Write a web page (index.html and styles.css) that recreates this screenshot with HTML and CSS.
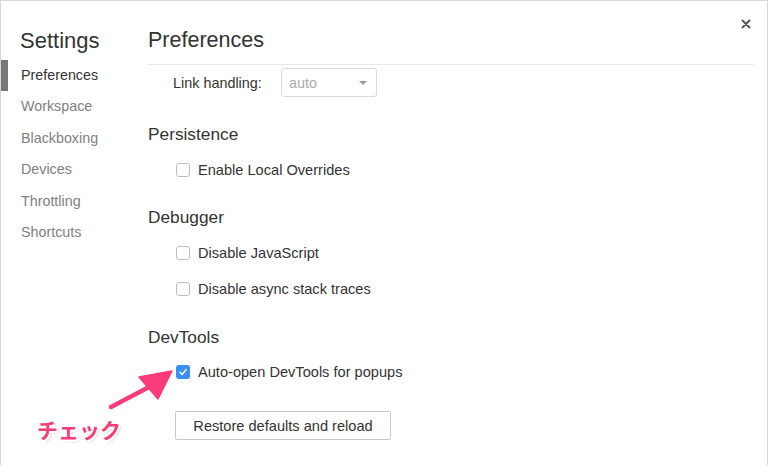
FILE: index.html
```html
<!DOCTYPE html>
<html lang="ja">
<head>
<meta charset="utf-8">
<title>Settings</title>
<link rel="stylesheet" href="styles.css">
</head>
<body>
<div class="dialog">
  <aside class="sidebar">
    <div class="sidebar-title">Settings</div>
    <ul class="tabs">
      <li class="tab active">Preferences</li>
      <li class="tab">Workspace</li>
      <li class="tab">Blackboxing</li>
      <li class="tab">Devices</li>
      <li class="tab">Throttling</li>
      <li class="tab">Shortcuts</li>
    </ul>
  </aside>
  <main class="main">
    <h1 class="page-title">Preferences</h1>
    <div class="link-row">
      <span class="link-label">Link handling:</span>
      <span class="select"><span class="select-value">auto</span><span class="select-arrow"></span></span>
    </div>

    <h2 class="section">Persistence</h2>
    <label class="check-row"><span class="box"></span>Enable Local Overrides</label>

    <h2 class="section">Debugger</h2>
    <label class="check-row"><span class="box"></span>Disable JavaScript</label>
    <label class="check-row"><span class="box"></span>Disable async stack traces</label>

    <h2 class="section last">DevTools</h2>
    <label class="check-row tight"><span class="box checked"><svg viewBox="0 0 14 14" width="14" height="14"><path d="M4 7.3 L6.1 9.4 L10.2 4.6" fill="none" stroke="#fff" stroke-width="1.5" stroke-linecap="round" stroke-linejoin="round"/></svg></span>Auto-open DevTools for popups</label>

    <div class="actions">
      <button class="restore">Restore defaults and reload</button>
    </div>
  </main>

  <button class="close" aria-label="close"><svg viewBox="0 0 10 10" width="10" height="10"><path d="M1.5 1.5 L8.5 8.5 M8.5 1.5 L1.5 8.5" stroke="#555" stroke-width="1.9" stroke-linecap="round"/></svg></button>

  <svg class="annot-arrow" width="90" height="60" viewBox="0 0 90 60">
    <g transform="translate(-100,-360)">
      <path d="M110 406 L150 385" stroke="#fff" stroke-width="8" stroke-linecap="round"/>
      <path d="M171 370 L137 376 L157 399 Z" fill="#fff" stroke="#fff" stroke-width="4" stroke-linejoin="round"/>
      <path d="M110 406 L150 385" stroke="#fb3a79" stroke-width="4.5" stroke-linecap="round"/>
      <path d="M171 370 L138 376 L157 398 Z" fill="#fb3a79" stroke="#fb3a79" stroke-width="1.5" stroke-linejoin="round"/>
    </g>
  </svg>
  <div class="annot-text">チェック</div>
</div>
</body>
</html>
```

FILE: styles.css
```css
* { box-sizing: border-box; }
html, body { margin: 0; padding: 0; background: #fff; }
body {
  font-family: "Liberation Sans", Arial, sans-serif;
  color: #333;
}
.dialog {
  position: relative;
  display: flex;
  width: 768px;
  height: 465px;
  border-top: 1px solid #d6d6d6;
  border-left: 1px solid #d6d6d6;
  border-right: 1px solid #d6d6d6;
  overflow: hidden;
}
.sidebar {
  width: 147px;
  flex: none;
  padding-top: 27px;
}
.sidebar-title {
  padding-left: 19px;
  font-size: 22px;
  line-height: 25px;
  color: #333;
}
.tabs {
  list-style: none;
  margin: 6.5px 0 0;
  padding: 0;
}
.tab {
  position: relative;
  height: 31.6px;
  line-height: 31.6px;
  padding-left: 20px;
  font-size: 14.3px;
  color: #808080;
}
.tab.active { color: #333; }
.tab.active::before {
  content: "";
  position: absolute;
  left: 0;
  top: 0;
  width: 7px;
  height: 100%;
  background: #777;
}
.main {
  flex: 1;
  padding-top: 27px;
  padding-right: 13px;
  display: flex;
  flex-direction: column;
  align-items: flex-start;
}
.page-title {
  align-self: stretch;
  margin: 0;
  font-weight: normal;
  font-size: 21.5px;
  line-height: 25px;
  color: #333;
  padding-bottom: 11px;
  border-bottom: 1px solid #e8e8e8;
}
.link-row {
  display: flex;
  align-items: center;
  margin-top: 3px;
  padding-left: 25px;
  height: 29px;
  font-size: 14.4px;
}
.link-label { width: 108px; }
.select {
  display: flex;
  align-items: center;
  justify-content: space-between;
  width: 96px;
  height: 29px;
  border: 1px solid #dcdcdc;
  border-radius: 3px;
  padding: 0 9px 0 7px;
  color: #aaa;
}
.select-arrow {
  width: 0;
  height: 0;
  border-left: 4px solid transparent;
  border-right: 4px solid transparent;
  border-top: 4px solid #999;
}
.section {
  margin: 27px 0 0;
  font-weight: normal;
  font-size: 17.3px;
  line-height: 20px;
  color: #333;
}
.section.last { margin-top: 28px; }
.check-row {
  display: flex;
  align-items: center;
  margin-top: 16px;
  margin-left: 28px;
  height: 20px;
  font-size: 14.6px;
  color: #333;
}
.check-row.tight { margin-top: 15px; }
.box {
  width: 14px;
  height: 14px;
  margin-right: 8px;
  border: 1px solid #bdbdbd;
  border-radius: 3px;
  background: #fff;
  flex: none;
  display: flex;
}
.box.checked {
  border: none;
  background: #3a8ef6;
}
.actions { margin-top: 29px; margin-left: 27px; }
.restore {
  font-family: "Liberation Sans", Arial, sans-serif;
  font-size: 14.6px;
  color: #333;
  background: #fff;
  border: 1px solid #c8c8c8;
  border-radius: 2px;
  height: 29px;
  width: 216px;
  padding: 0;
}
.close {
  position: absolute;
  top: 15px;
  left: 739px;
  width: 12px;
  height: 12px;
  padding: 1px;
  border: none;
  background: none;
}
.annot-arrow {
  position: absolute;
  left: 100px;
  top: 360px;
}
.annot-text {
  position: absolute;
  left: 36px;
  top: 414px;
  font-family: "Noto Sans CJK JP", sans-serif;
  font-weight: bold;
  font-size: 21px;
  line-height: 28px;
  color: #fb3a79;
  text-shadow: -1.5px -1.5px 0 #fff, 1.5px -1.5px 0 #fff, -1.5px 1.5px 0 #fff, 1.5px 1.5px 0 #fff, 2px 2px 2px rgba(0,0,0,0.25);
}
```
